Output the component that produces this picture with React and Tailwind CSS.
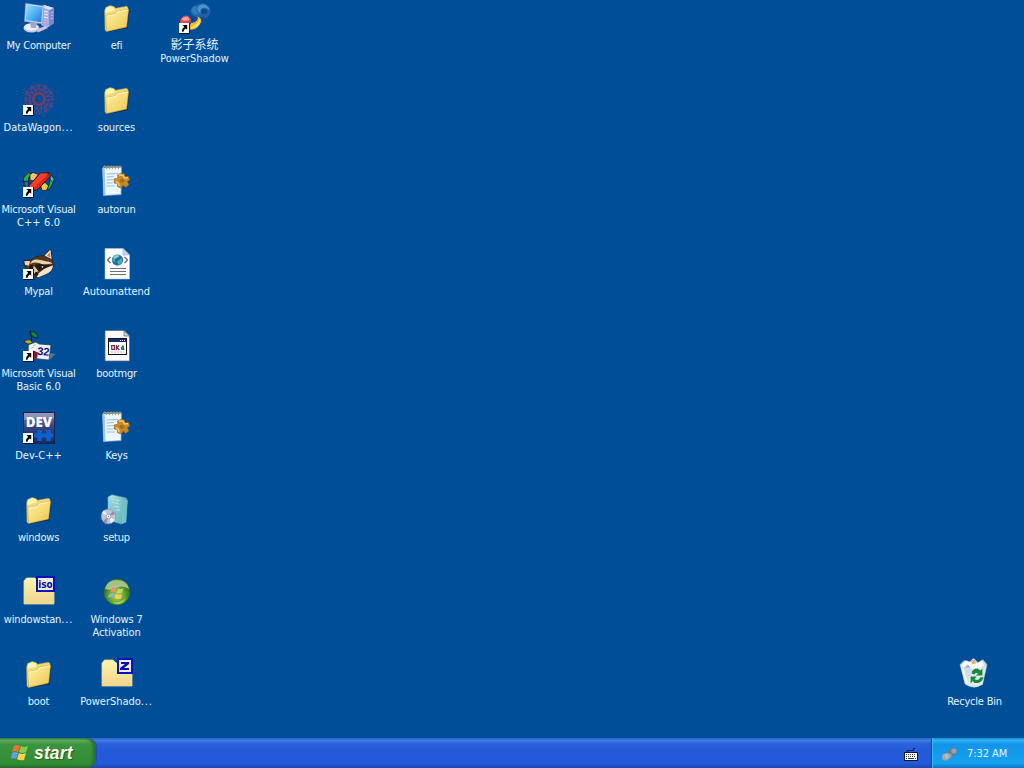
import React from "react";

function Icon({ children }) {
  return (
    <svg viewBox="0 0 32 32" className="block h-8 w-8 shrink-0 overflow-visible">
      {children}
    </svg>
  );
}

function Shortcut() {
  return (
    <g>
      <rect x="0" y="21" width="11" height="11" fill="#111820" />
      <rect x="0" y="21" width="10" height="10" fill="#fff" />
      <path d="M3.5 23H8.2V27.7L6.8 26.4Q4.7 27.5 4.4 29.8H2.9Q2.6 26.7 5.2 24.7Z" fill="#000" />
    </g>
  );
}

function FolderIcon() {
  return (
    <Icon>
      <path d="M6 30L26.5 26.5L28.4 9L27 7L7 27Z" fill="#0a2038" opacity=".65" />
      <path d="M3.6 9L4.6 5.5L9 3.6L13 4.5L14.5 6.3L25.5 4.2L27 5.5V9L24 25L5 29.3L4 28Z" fill="#f0d878" stroke="#b8a04a" strokeWidth=".5" />
      <path d="M4.4 8L5.4 5.9L9 4.3L12.6 5.3L13.6 8.5L5 11Z" fill="#f7f6ae" />
      <path d="M4.6 13.8L14 12L16 9.4L27.6 7.2L25.6 25L5.6 29.4Z" fill="url(#folderFace)" stroke="#c39a35" strokeWidth=".5" />
      <path d="M5.3 14.2L14.4 12.6L16.4 10L27 8" fill="none" stroke="#fffad0" strokeWidth=".9" />
    </Icon>
  );
}

function ComputerIcon() {
  return (
    <Icon>
      <path d="M18 5L21 3L31 6V21L24 26L18 23Z" fill="#a9aede" />
      <path d="M21 3L31 6L27 8L18 5Z" fill="#dfe2f7" />
      <path d="M26 8L31 6V21L26 25Z" fill="#7f86c6" />
      <path d="M21 9L25 10M21 12L25 13M21 15L25 16" stroke="#eef" strokeWidth="1" />
      <path d="M27.5 11L30 10M27.5 14L30 13M27.5 17L30 16" stroke="#c8ccf0" strokeWidth=".9" />
      <ellipse cx="8.5" cy="26" rx="8" ry="4.6" fill="#c3cbe6" />
      <ellipse cx="8" cy="25" rx="7" ry="3.5" fill="#edf1fb" />
      <path d="M7 20L14 21L13 26L8 26Z" fill="#9da9cf" />
      <path d="M13 27.5L22 24L25 26L15 30.5Z" fill="#c7c4dc" />
      <path d="M2.5 1.2L21 4L19.5 22L1.4 19.4Z" fill="#c3d3f0" stroke="#7086b9" strokeWidth=".5" />
      <path d="M4 2.7L19.5 5.2L18.2 20.2L2.8 17.9Z" fill="url(#screen)" />
    </Icon>
  );
}

function ShadowIcon() {
  return (
    <Icon>
      <path d="M11.5 10Q11 4 17 3Q20 .6 25 1.4Q31 2.6 31.6 8.6Q31.4 14 26.6 16.4Q23.6 14.6 20.6 15.4Q14 16 11.5 10Z" fill="#1e62a6" />
      <path d="M12.4 9Q13 4.4 18 4Q16.6 9 20 12Q14.6 14 12.4 9Z" fill="#2f7cc0" />
      <path d="M18.6 6Q20 2 25 2.4Q30 3.6 30.6 8.6Q27 4.6 23.6 6Q20.6 8 21.6 11.4Q18 9.6 18.6 6Z" fill="#4b93cc" />
      <path d="M22.4 11Q21.6 7.4 25 6.8Q28.4 7 28.4 10.6Q26 13.6 22.4 11Z" fill="#0d4a8c" />
      <path d="M1 21Q1 14 7 13.5Q12 14 12 19L9 25H3Z" fill="#db4b50" />
      <path d="M2.4 17.6Q4.6 14.6 8.4 14.6Q10 16 10.6 18L5 19Z" fill="#f2a3a0" />
      <path d="M18.6 14.4Q25 17 20.5 23Q16 29 9 27.6Q10 23 12.6 20.6Q16 21 18 18.6Q19.4 17 18.6 14.4Z" fill="#f8b52a" />
      <path d="M19.8 16Q21 20 14.5 23.5Q12.5 25 11.5 26.6Q19 26.5 21.4 19.5Z" fill="#ffe884" />
      <Shortcut />
    </Icon>
  );
}

function WagonIcon() {
  const turns = [0, 30, 60, 90, 120, 150, 180, 210, 240, 270, 300, 330];
  return (
    <Icon>
      <g transform="translate(16 15)" fill="none" stroke="#66467f" opacity=".9">
        <circle r="5.6" strokeWidth="2.8" stroke="#86375a" />
        <circle r="9.6" strokeWidth="2" strokeDasharray="2.4 1.6" stroke="#783f70" />
        {turns.map((a) => (
          <g key={a} transform={`rotate(${a})`}>
            <path d="M0 -6L2.4 -9L0 -12L-3.4 -14.4M0 -12L3.4 -14.4M-2 -10L-2.4 -13" strokeWidth="1" />
            <circle cy="-14.4" r=".8" strokeWidth=".9" stroke="#7f4273" />
          </g>
        ))}
      </g>
      <Shortcut />
    </Icon>
  );
}

function VisualCIcon() {
  return (
    <Icon>
      <g stroke="#061521" strokeWidth=".7" strokeLinejoin="round">
        <path d="M.5 12L5.5 6.6L9 8L5.5 12V22H3L1 20Z" fill="#35ae3f" />
        <path d="M.8 15.5L5 15L6 22H3Z" fill="#2867d2" />
        <path d="M7 8.5L10 6.5L15.5 8.5L10.5 15L7 14Z" fill="#f0c869" />
        <path d="M17.6 19.6L22 16.4L25.6 20L23.6 24.4H19Z" fill="#f0c84d" />
        <path d="M24.6 6.4L28.6 8.4L31.6 14L27 22.6L24 24L25.8 19.5L27 13.6Z" fill="#35ae3f" />
        <path d="M27.8 8.8L31.2 13L30 16.8L27 13Z" fill="#4bb1ef" />
        <path d="M5.5 20L17.6 6.8H25L27 10.4L14.4 24H10Z" fill="#d9261b" />
        <path d="M17.8 7.4H24.6L22 11.2L10 22.8L6.4 20Z" fill="#f04028" stroke="none" />
      </g>
      <Shortcut />
    </Icon>
  );
}

function RaccoonIcon() {
  return (
    <Icon>
      <path d="M.8 15.6L1.4 12.4L8 12Q13 7.4 21 7.6L25 3L28 1.4L29 11L30.4 18Q28 25 21 27L14 30L5 24Z" fill="#53371f" stroke="#2b1b12" strokeWidth=".6" />
      <path d="M21.6 7.6L27.4 1.8L28.6 11Z" fill="#f3e6d4" />
      <path d="M24 7.6L27 4.2L27.4 9.8Z" fill="#bf8358" />
      <path d="M1.2 13.2L7 13L6 17.6L2.4 17Z" fill="#ecdcbc" />
      <path d="M7 16Q9 11.4 14 11.6Q19 12 23.6 13.6Q28 13 29.4 16Q24 15.4 20.6 17.4Q15 12.6 7 16Z" fill="#ecd3ac" />
      <path d="M12 17Q18 14.6 27.6 17.8L20 22L13 23.6Z" fill="#241914" />
      <path d="M16 25Q22 19.4 30 17.6Q29.6 24 22 26.6L15 29.6L12.6 27Z" fill="#f5e4c9" />
      <path d="M6 18.6Q8 15.6 11 17.6L11.6 22L7 23Z" fill="#22160f" />
      <path d="M10.6 17.6L15 22.6L13.6 26.6L9.6 25Z" fill="#dfc69d" />
      <circle cx="19.4" cy="18.8" r=".9" fill="#eddca6" />
      <circle cx="13.4" cy="26" r="2" fill="#20150f" />
      <Shortcut />
    </Icon>
  );
}

function VisualBasicIcon() {
  return (
    <Icon>
      <path d="M14 28L26 30.4L32.6 24L27 23Z" fill="#5b7493" />
      <path d="M5.4 14.6L13 12L16 14L28 15L26 30L11 28.4L5 24Z" fill="#f0f2f8" stroke="#263549" strokeWidth=".7" />
      <path d="M8 12L8.6 7L7 1" fill="none" stroke="#07190a" strokeWidth="1.2" />
      <path d="M7.4 2.4Q11 0 14.6 5Q15 8.6 12 7.6Q8 7 7.4 2.4Z" fill="#1f7a4a" stroke="#061e19" strokeWidth=".8" />
      <path d="M1 11.6Q4 8.8 7.4 9.8L9.4 12.6Q5 16 1 11.6Z" fill="#a9a83a" stroke="#232a08" strokeWidth=".8" />
      <path d="M10.6 20.5L15 22.5L14 28.6H10Z" fill="#8d1729" />
      <path d="M10 15.4L13 14.6M8 18L11 17.4" stroke="#b9c1d2" />
      <text x="14" y="24.8" transform="rotate(5 15 24)" fontFamily="Liberation Sans" fontWeight="700" fontSize="11" fill="#101969">32</text>
      <Shortcut />
    </Icon>
  );
}

function DevIcon() {
  return (
    <Icon>
      <rect x=".5" y=".5" width="31" height="31" fill="url(#dev)" stroke="#17234e" />
      <path d="M1 1H31V7Q18 3 1 8Z" fill="#b1b5d9" opacity=".5" />
      <text x="2.7" y="15.4" textLength="26.4" lengthAdjust="spacingAndGlyphs" fontFamily="Open Sans" fontWeight="800" fontSize="13.5" fill="#fff">DEV</text>
      <path d="M14.4 18H18.6V21.6H22V25.4H18.6V29H14.4V25.4H11V21.6H14.4ZM23.4 18H27.6V21.6H30.4V25.4H27.6V29H23.4V25.4H21V21.6H23.4Z" fill="#0c62cf" />
      <Shortcut />
    </Icon>
  );
}

function IsoIcon() {
  return (
    <Icon>
      <path d="M1 28V5L3.5 2H12L15 5H31V28Z" fill="url(#archive)" stroke="#e8dc9c" strokeWidth=".8" />
      <path d="M2 6L4.5 3H11" fill="none" stroke="#fffbd7" />
      <rect x="14" y="1" width="17" height="14" fill="#eeedd9" stroke="#0a12bc" strokeWidth="2" />
      <text x="15.3" y="11.8" textLength="14.4" lengthAdjust="spacingAndGlyphs" fontFamily="DejaVu Sans Condensed" fontWeight="700" fontSize="10.5" fill="#070ba5">iso</text>
    </Icon>
  );
}

function NotesIcon() {
  return (
    <Icon>
      <path d="M1.6 2L20.4 1.4L20 28.6L2.6 29.6Z" fill="#edf7ff" stroke="#8aafd6" strokeWidth=".7" />
      <path d="M1.6 3L3.8 3L4.4 29L2.6 29.6Z" fill="#9bc3ed" />
      <path d="M2 2.4Q3.5 -2 5.5 2Q7 -2 8.5 2Q10 -2 11.5 2Q13 -2 14.5 2Q16 -2 17.5 2Q19 -2 20.5 2" fill="none" stroke="#a89c78" strokeWidth="1.2" />
      <path d="M5.6 8L17 7.5M5.6 11L12.6 10.5M5.6 14L13 13.5M5.6 17L11.6 17M5.6 20L14 20" stroke="#8cb3e0" strokeWidth=".9" />
      <g transform="translate(21 14.8) rotate(8)" fill="#c88a28" stroke="#8c5f16" strokeWidth=".5">
        <path d="M-3 -7L1.4 -7.4L2.4 -4.4L5.6 -5.4L7.8 -2L5.4 0L7.4 3L4.6 6L1.6 4L.4 7.4L-4 6.4L-4 3.4L-7.6 3.4L-7.8 -1L-4.4 -2L-5.4 -5Z" />
        <ellipse rx="2.2" ry="1.6" fill="#a8731f" />
      </g>
      <path d="M18 9L22 9.2L23.6 12L27 11.6M15 15.6L17.6 17.6L18 20" fill="none" stroke="#f7d270" strokeWidth="1.3" />
    </Icon>
  );
}

function AnswerIcon() {
  return (
    <Icon>
      <path d="M4 .5H22L28.5 7V31H4Z" fill="#fbfdff" stroke="#aebfd0" strokeWidth=".6" />
      <path d="M22 .5V7H28.5Z" fill="#bcd6ed" stroke="#84a9ca" strokeWidth=".5" />
      <circle cx="16.5" cy="12" r="5.6" fill="#226bac" />
      <path d="M11.5 10Q13 6 18 7L17 10L14 11L14 14L11.5 13ZM18 12L21 10L21 14L18 17L16 14Z" fill="#53b39a" />
      <path d="M12 10Q14 6 19 8L14 10Z" fill="#a7e1ee" opacity=".75" />
      <path d="M9.5 9L6.5 12L9.5 15M23.5 9L26.5 12L23.5 15" fill="none" stroke="#60646e" strokeWidth="1.2" />
      <path d="M9 20.5H25M9 23.5H25M9 26.5H25" stroke="#6e6e76" strokeWidth="1" />
    </Icon>
  );
}

function BootIcon() {
  return (
    <Icon>
      <path d="M4 .5H23L28.5 6V31H4Z" fill="#fbfbfc" stroke="#586676" strokeWidth=".7" />
      <path d="M23 .5V6H28.5Z" fill="#cbd4dd" stroke="#59636e" strokeWidth=".7" />
      <rect x="7.5" y="8.5" width="18" height="16" fill="#fff" stroke="#111" />
      <path d="M8 9H25V12H8Z" fill="#112c83" />
      <path d="M19 10.5H20M21 10.5H22M23 10.5H24" stroke="#fff" />
      <path d="M10.6 15.6H13.4V19.4H10.8Z" fill="none" stroke="#8e2748" strokeWidth="1.2" />
      <path d="M15.4 15V20.2M18.2 15.4L16 17.6L18.4 20" fill="none" stroke="#66306c" strokeWidth="1.3" />
      <path d="M20.4 17.6L22 15.4L23 19.6H20.4Z" fill="#399f52" stroke="#245d39" strokeWidth=".9" />
      <path d="M10 22H23" stroke="#cba5b4" strokeDasharray="2 1" />
    </Icon>
  );
}

function SetupIcon() {
  return (
    <Icon>
      <path d="M7 3L11 .8L25 4L26.4 6.4L25 28L20.6 30L7 26Z" fill="url(#box)" stroke="#66a9b2" strokeWidth=".6" />
      <path d="M7 3L21.6 6.6L20.6 30L7 26Z" fill="#85cbd0" opacity=".6" />
      <path d="M21.6 6.6L26.4 6.4L25 28L20.6 30Z" fill="#6fc2c6" />
      <path d="M10 5L18 7M11 8L18 10M13 12L18 13.4M15 16H19" stroke="#bce6e5" strokeWidth="1.2" />
      <circle cx="7.5" cy="22.5" r="7.4" fill="#bdc5d3" stroke="#7a91a6" strokeWidth=".6" />
      <path d="M7.5 22.5L3 16L1 19ZM7.5 22.5L10 29L14 26Z" fill="#f2effa" />
      <path d="M7.5 22.5L12 17L14 20ZM7.5 22.5L2 27L5 30Z" fill="#978baf" />
      <circle cx="7.5" cy="22.5" r="2.3" fill="#f5f7fa" stroke="#a2a9b8" />
      <circle cx="7.5" cy="22.5" r=".7" fill="#6f8ea8" />
    </Icon>
  );
}

function ActivationIcon() {
  return (
    <Icon>
      <circle cx="16" cy="16" r="13" fill="url(#orb)" stroke="#396b1d" strokeWidth=".6" />
      <path d="M4 13Q6 4 16 4Q26 4 28 13Q21 8.4 15 12Q9 15 4 13Z" fill="#cfe0b8" opacity=".7" />
      <path d="M10.6 12Q13 10.4 15.6 12L14 16.6Q11.4 14.8 8.8 16.6Z" fill="#e09a62" />
      <path d="M17 12Q20 14 22.6 12L21 16.8Q18 18 15.4 16.8Z" fill="#b8d872" />
      <path d="M8.4 18Q11 16 13.6 18L12 21.6Q9.4 20.6 6.6 21.6Z" fill="#8cb5cc" />
      <path d="M15 18Q18 20 20.8 18L20 22.6Q16 23.8 13.4 21.8Z" fill="#eed066" />
      <path d="M8 24Q16 30 25 22Q21 29.6 14 27.6Z" fill="#d0f07a" opacity=".7" />
    </Icon>
  );
}

function ZIcon() {
  return (
    <Icon>
      <path d="M1 28V5L3.5 2H12L15 5H31V28Z" fill="url(#archive)" stroke="#e8dc9c" strokeWidth=".8" />
      <rect x="17" y="1" width="14" height="14" fill="#eeeddb" stroke="#0a12bc" strokeWidth="2" />
      <path d="M20 4H28V6L23 10H28V12H19V10L24 6H20Z" fill="#0a10ac" />
    </Icon>
  );
}

function RecycleIcon() {
  return (
    <Icon>
      <g transform="translate(-1 -.5)">
        <path d="M2 7L6 3L12 4L16 1L20 5L25 2L29 7L24.6 27Q15 32.6 7 26.6Z" fill="#cdd9e3" stroke="#7895ae" strokeWidth=".6" />
        <path d="M3 8L8 3L12 5L15 1L19 6L24 3L26 8L20 12L8 11Z" fill="#f8f9f7" />
        <path d="M13 3L17 2L18 6L14 7Z" fill="#d7b785" />
        <path d="M5 11L10 7L14 13L12 19L8 21Z" fill="#a3aed2" />
        <path d="M2 7L6 10L25 11L29 7L24.6 27Q15 32.6 7 26.6Z" fill="#e6efee" opacity=".7" />
        <path d="M5 11L9 26" stroke="#fff" strokeWidth="1.4" />
        <path d="M13.6 16Q14 11 19.6 11L22.4 13L24.4 11V18H17.6L20.4 16Q17.4 14.4 16 17ZM12.6 19H18.6L16.6 21.8Q20.6 23.6 22.6 19.8H25.6Q23.6 26.6 16.6 25.4L14.6 23.6L12.6 26Z" fill="#17893c" />
      </g>
    </Icon>
  );
}

const columns = [
  [
    [ComputerIcon, ["My Computer"]],
    [WagonIcon, ["DataWagon..."]],
    [VisualCIcon, ["Microsoft Visual", "C++ 6.0"]],
    [RaccoonIcon, ["Mypal"]],
    [VisualBasicIcon, ["Microsoft Visual", "Basic 6.0"]],
    [DevIcon, ["Dev-C++"]],
    [FolderIcon, ["windows"]],
    [IsoIcon, ["windowstan..."]],
    [FolderIcon, ["boot"]],
  ],
  [
    [FolderIcon, ["efi"]],
    [FolderIcon, ["sources"]],
    [NotesIcon, ["autorun"]],
    [AnswerIcon, ["Autounattend"]],
    [BootIcon, ["bootmgr"]],
    [NotesIcon, ["Keys"]],
    [SetupIcon, ["setup"]],
    [ActivationIcon, ["Windows 7", "Activation"]],
    [ZIcon, ["PowerShado..."]],
  ],
  [[ShadowIcon, ["影子系统", "PowerShadow"]]],
];

const tracking = {
  "My Computer": "tracking-[-0.24px]",
  "DataWagon...": "tracking-[0.06px]",
  "windowstan...": "tracking-[-0.16px]",
  "PowerShado...": "tracking-[-0.02px]",
  PowerShadow: "tracking-[-0.05px]",
  Autounattend: "tracking-[-0.1px]",
  "Windows 7": "tracking-[-0.15px]",
  Activation: "tracking-[-0.15px]",
  "C++ 6.0": "tracking-[0.1px]",
  "Basic 6.0": "tracking-[-0.1px]",
  "Dev-C++": "tracking-[0.05px]",
  autorun: "tracking-[-0.1px]",
  sources: "tracking-[-0.1px]",
  影子系统: "text-[12px] tracking-[0px]",
};

function Label({ line }) {
  const clipped = line.endsWith("...");
  return (
    <span className={tracking[line] || "tracking-[-0.22px]"}>
      {clipped ? line.slice(0, -3) : line}
      {clipped && <span className="tracking-[0.85px]">...</span>}
    </span>
  );
}

function DesktopItem({ Glyph, lines }) {
  return (
    <div className="flex h-[82px] w-[78px] shrink-0 flex-col items-center pt-0.5 pr-px">
      <Glyph />
      <div className="mt-[5px] flex flex-col items-center text-[11px] leading-[13px] whitespace-nowrap text-[#e4f6ff]">
        {lines.map((line) => (
          <Label key={line} line={line} />
        ))}
      </div>
    </div>
  );
}

function Gradients() {
  return (
    <svg className="absolute h-0 w-0" aria-hidden="true">
      <defs>
        <linearGradient id="folderFace" x2="1" y2="1"><stop stopColor="#fff3a2" /><stop offset="1" stopColor="#edc550" /></linearGradient>
        <linearGradient id="screen" x2="1" y2="1"><stop stopColor="#9cddff" /><stop offset=".5" stopColor="#4db5f6" /><stop offset="1" stopColor="#2474d4" /></linearGradient>
        <linearGradient id="dev" x2="0" y2="1"><stop stopColor="#777aa8" /><stop offset=".5" stopColor="#344180" /><stop offset="1" stopColor="#112b6b" /></linearGradient>
        <linearGradient id="archive" x2="0" y2="1"><stop stopColor="#fbf6ac" /><stop offset="1" stopColor="#f0d48a" /></linearGradient>
        <linearGradient id="box" x2="1" y2="1"><stop stopColor="#c6ebee" /><stop offset="1" stopColor="#278e9d" /></linearGradient>
        <radialGradient id="orb" cx=".5" cy=".65"><stop stopColor="#b9d64c" /><stop offset=".6" stopColor="#65a330" /><stop offset="1" stopColor="#397620" /></radialGradient>
      </defs>
    </svg>
  );
}

export default function App() {
  return (
    <div className="relative flex h-[768px] w-[1024px] flex-col overflow-hidden bg-[#004e98] font-['DejaVu_Sans_Condensed','Noto_Sans_CJK_SC',sans-serif]">
      <Gradients />
      <main className="flex h-[738px] items-start">
        {columns.map((column, index) => (
          <div key={index} className="flex flex-col">
            {column.map(([Glyph, lines]) => (
              <DesktopItem key={lines.join(" ")} Glyph={Glyph} lines={lines} />
            ))}
          </div>
        ))}
        <div className="mr-[10px] ml-auto flex h-full flex-col justify-end">
          <DesktopItem Glyph={RecycleIcon} lines={["Recycle Bin"]} />
        </div>
      </main>

      <footer className="flex h-[30px] shrink-0 bg-[linear-gradient(180deg,#2a62c4_0%,#3f7ce6_8%,#2a62da_18%,#2459d8_50%,#245bdc_82%,#1d49b3_100%)]">
        <button className="flex h-full w-[96px] items-center rounded-r-[9px] bg-[linear-gradient(180deg,#3b8346_0%,#5fa962_8%,#3b9440_22%,#348f38_65%,#328b35_88%,#246a2b_100%)] pl-[11px] shadow-[inset_-3px_0_3px_#24702e,1px_0_1px_#214abd]">
          <svg viewBox="0 0 18 18" className="h-[18px] w-[18px]">
            <path d="M3 2Q6 0 9 2L7 8Q4 6 1 8Z" fill="#ef713a" />
            <path d="M10 2Q13 4 17 2L15 8Q12 10 8 8Z" fill="#8ccc46" />
            <path d="M1 9Q4 7 7 9L5 15Q3 13 0 15Z" fill="#679df0" />
            <path d="M8 9Q11 11 15 9L13 16Q9 17 6 15Z" fill="#f5d34b" />
          </svg>
          <span className="ml-[5px] font-['Liberation_Sans',sans-serif] text-[17.5px] leading-5 font-bold tracking-[0.15px] text-[#fff9e9] italic [text-shadow:1px_1px_1px_#245e28]">start</span>
        </button>
        <div className="flex flex-1 items-center justify-end pr-[13px]">
          <svg viewBox="0 0 14 13" className="mt-[3px] h-[13px] w-[14px]">
            <path d="M3 4V2.5H9.5V.5H11" fill="none" stroke="#111d41" />
            <rect x=".5" y="4.5" width="13" height="8" fill="#fff" stroke="#101831" />
            <path d="M2 6.5H12M2 8.5H12" stroke="#273044" strokeDasharray="1 1" />
            <path d="M2 10.5H3M4 10.5H10M11 10.5H12" stroke="#273044" />
          </svg>
        </div>
        <div className="flex w-[93px] items-center border-l border-[#123fae] bg-[linear-gradient(180deg,#178ad5_0%,#2cb4f4_8%,#1593ea_20%,#119cec_55%,#16a0ed_85%,#0a73c8_100%)] pl-[10px] shadow-[inset_1px_0_0_#36c5fb]">
          <svg viewBox="0 0 16 14" className="mt-px h-[14px] w-4">
            <path d="M5 5Q8 0 13 1Q17 4 13 8L9 10L6 8Z" fill="#687c91" />
            <circle cx="12" cy="4" r="2.6" fill="#95a4ae" />
            <path d="M0 9Q1 6 5 6L9 7Q11 9 7 12Q3 15 0 12Z" fill="#9aa6ac" />
            <path d="M2 8L6 7L7 10L4 12Z" fill="#c2bbb4" />
          </svg>
          <span className="ml-[9px] text-[11px] leading-[13px] tracking-[-0.05px] whitespace-nowrap text-[#e4f6ff]">7:32 AM</span>
        </div>
      </footer>
    </div>
  );
}
